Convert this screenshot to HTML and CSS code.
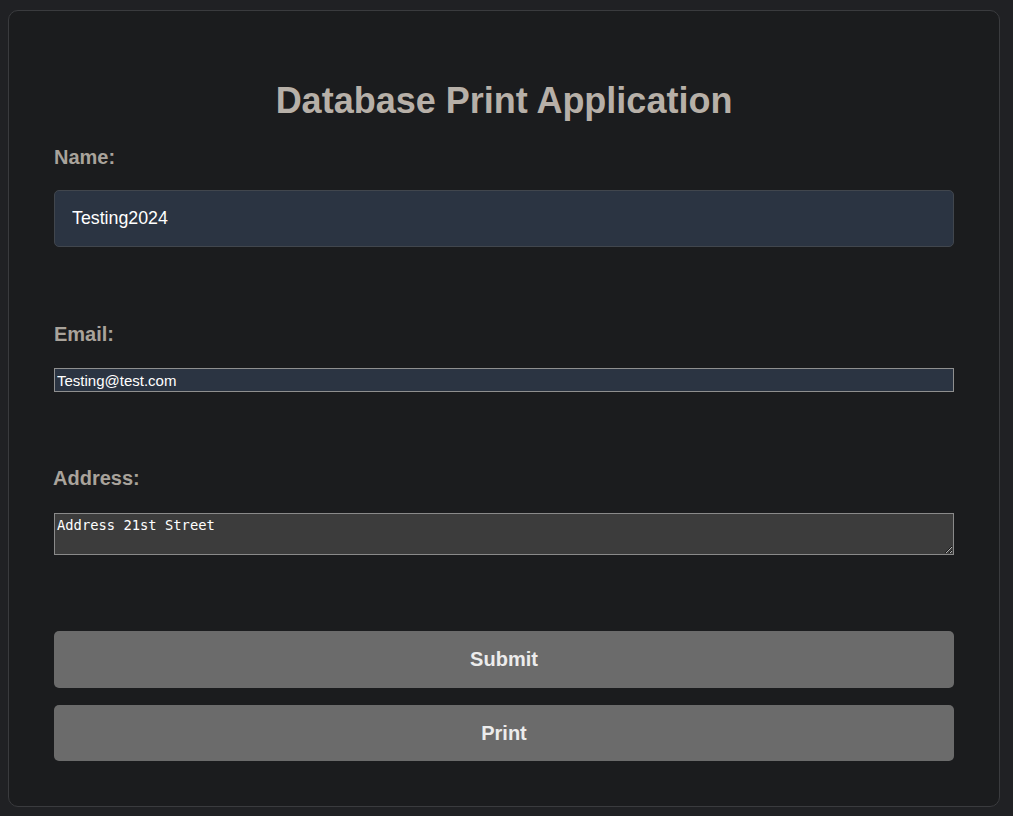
FILE: index.html
```html
<!DOCTYPE html>
<html lang="en">
<head>
<meta charset="utf-8">
<title>Database Print Application</title>
<link rel="stylesheet" href="styles.css">
</head>
<body>
<main class="card">
  <h1 class="title">Database Print Application</h1>
  <form class="form">
    <div class="group">
      <label class="label" for="name">Name:</label>
      <input class="name-input" id="name" type="text" value="Testing2024">
    </div>
    <div class="group">
      <label class="label" for="email">Email:</label>
      <input class="email-input" id="email" type="email" value="Testing@test.com">
    </div>
    <div class="group">
      <label class="label" for="address">Address:</label>
      <textarea class="address-input" id="address">Address 21st Street</textarea>
    </div>
    <div class="actions">
      <button class="btn" type="button">Submit</button>
      <button class="btn" type="button">Print</button>
    </div>
  </form>
</main>
</body>
</html>
```
FILE: styles.css
```css
html, body {
  background: #202124;
}
body {
  margin: 8px;
  font-family: "Liberation Sans", Arial, sans-serif;
}
.card {
  box-sizing: border-box;
  width: 992px;
  margin-top: 2px;
  border: 1px solid #3a3b3e;
  border-radius: 10px;
  background: #1b1c1e;
  padding: 69px 45px 45px;
}
.title {
  margin: 0;
  font-size: 36px;
  line-height: 42px;
  font-weight: bold;
  text-align: center;
  color: #b7b0a8;
}
.form {
  display: flex;
  flex-direction: column;
  margin-top: 23px;
}
.group {
  display: flex;
  flex-direction: column;
  margin-bottom: 75px;
}
.group:nth-child(2) {
  margin-bottom: 74px;
}
.group:nth-child(3) {
  margin-bottom: 76px;
}
.label {
  font-size: 20px;
  line-height: 24px;
  font-weight: bold;
  color: #a9a39b;
  margin-bottom: 21px;
}
.group:nth-child(2) .label {
  margin-bottom: 22px;
}
.group:nth-child(3) .label {
  margin-bottom: 23px;
  margin-left: -1px;
}
.name-input {
  box-sizing: border-box;
  height: 57px;
  margin: 0;
  padding: 0 17px;
  border: 1px solid #41464d;
  border-radius: 5px;
  background: #2b3442;
  color: #ffffff;
  font-family: "Liberation Sans", Arial, sans-serif;
  font-size: 17.8px;
  outline: none;
}
.email-input {
  box-sizing: border-box;
  height: 24px;
  margin: 0;
  padding: 0 2px;
  border: 1px solid #8f8f8f;
  border-radius: 0;
  background: #2b3442;
  color: #ffffff;
  font-family: "Liberation Sans", Arial, sans-serif;
  font-size: 15px;
  outline: none;
}
.address-input {
  box-sizing: border-box;
  height: 42px;
  margin: 0;
  padding: 3px 2px 2px;
  border: 1px solid #8a8a8a;
  border-radius: 0;
  background: #3c3c3c;
  color: #ffffff;
  font-family: "DejaVu Sans Mono", "Liberation Mono", monospace;
  font-size: 13.8px;
  line-height: 16px;
  color-scheme: dark;
  outline: none;
}
.actions {
  display: flex;
  flex-direction: column;
  gap: 17px;
}
.btn {
  height: 57px;
  margin: 0;
  border: none;
  border-radius: 5px;
  background: #6b6b6b;
  color: #ececec;
  font-family: "Liberation Sans", Arial, sans-serif;
  font-size: 20px;
  font-weight: bold;
  cursor: pointer;
}
.btn + .btn {
  height: 56px;
}
```
